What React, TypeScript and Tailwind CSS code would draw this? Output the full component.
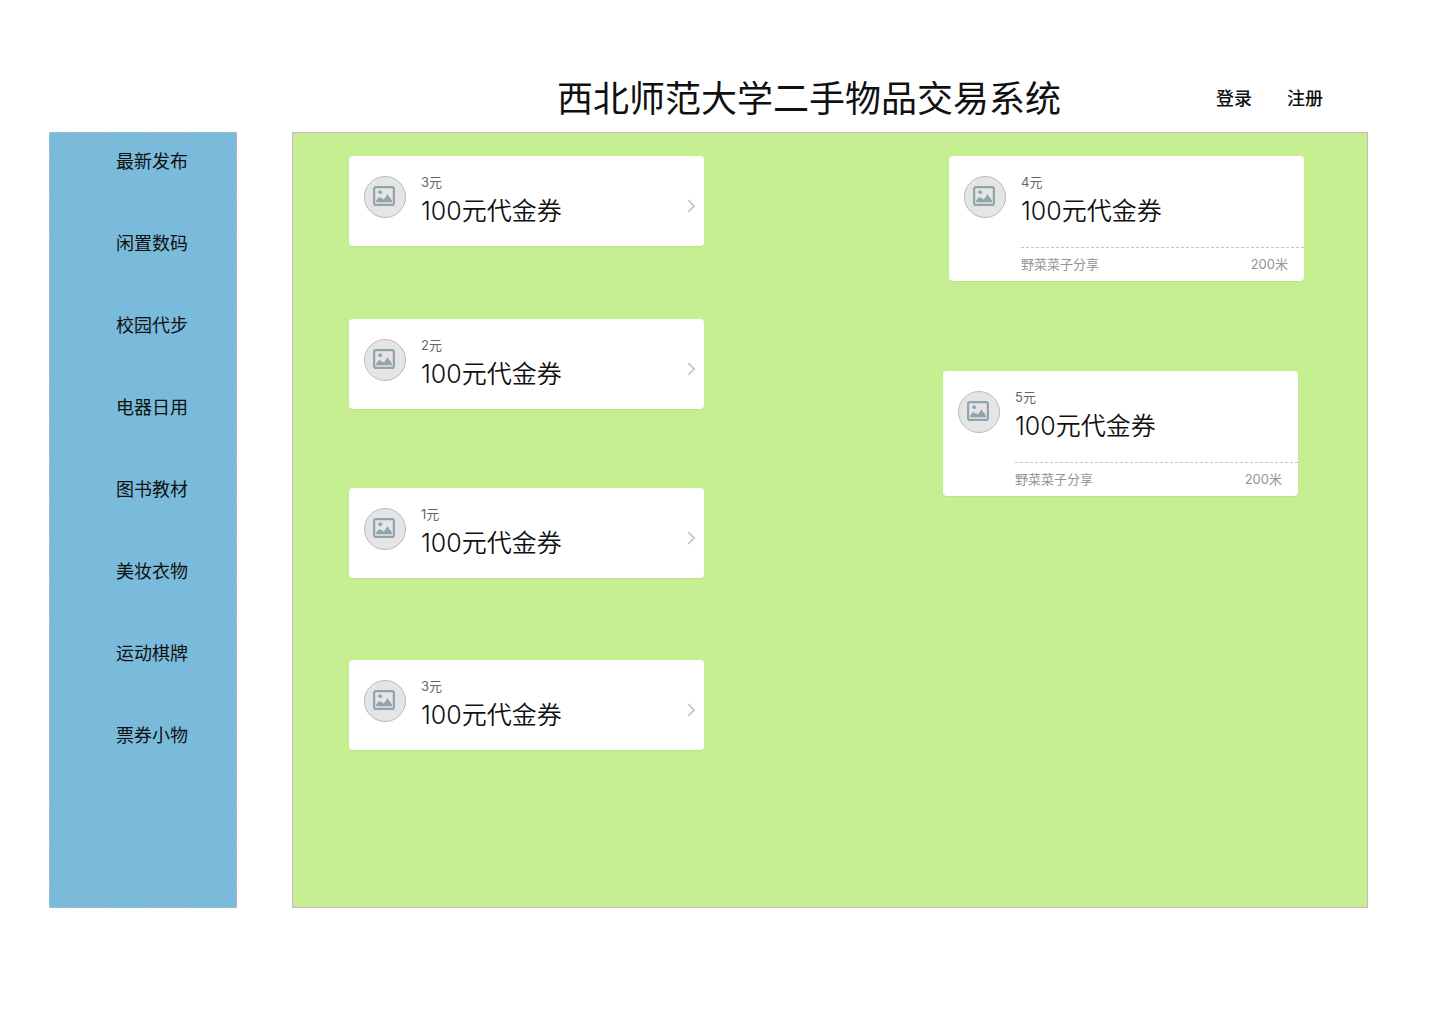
import React from 'react';

const categories = ['最新发布', '闲置数码', '校园代步', '电器日用', '图书教材', '美妆衣物', '运动棋牌', '票券小物'];

type Voucher = {
  price: string;
  spacing: string;
};

const simpleVouchers: Voucher[] = [
  { price: '3元', spacing: 'mt-0' },
  { price: '2元', spacing: 'mt-[73px]' },
  { price: '1元', spacing: 'mt-[79px]' },
  { price: '3元', spacing: 'mt-[82px]' },
];

const sharedVouchers: Voucher[] = [
  { price: '4元', spacing: 'mt-0' },
  { price: '5元', spacing: 'mt-[90px] mr-1.5' },
];

function Thumbnail() {
  return (
    <span className="mt-5 ml-[15px] flex size-[42px] shrink-0 items-center justify-center rounded-full border border-[#bbbbbb] bg-[#e5e5e5] pr-0.5 pb-0.5">
      <svg width="22" height="20" viewBox="0 0 22 20" fill="none" aria-hidden="true">
        <rect x="1.1" y="1.1" width="19.8" height="17.8" rx="2" stroke="#90a4ae" strokeWidth="2.2" />
        <circle cx="7.2" cy="6.2" r="1.9" fill="#90a4ae" />
        <path d="M3.2 16.3v-1.8L6.4 10.8l1.9 1.6.9-.3 1.6 1.6L14.7 8l1.4 3.2 1 .2 1.9 3.5v1.4z" fill="#90a4ae" />
      </svg>
    </span>
  );
}

function VoucherText({ price }: { price: string }) {
  return (
    <>
      <p className="mt-4 text-[13px] leading-5 text-[#666666]">{price}</p>
      <h2 className="text-[25px] leading-[38px] font-[350] text-[#101010]">100元代金券</h2>
    </>
  );
}

function SimpleCard({ price, spacing }: Voucher) {
  return (
    <a href="#voucher" className={`flex h-[90px] w-[355px] rounded bg-white shadow-[0_1px_2px_rgba(0,0,0,0.06)] ${spacing}`}>
      <Thumbnail />
      <div className="ml-[15px] flex-1">
        <VoucherText price={price} />
      </div>
      <svg className="mt-[43px] mr-2 shrink-0" width="9" height="14" viewBox="0 0 9 14" fill="none" aria-hidden="true">
        <path d="M1.3 1.2 7.2 7l-5.9 5.8" stroke="#c7c7cc" strokeWidth="1.8" />
      </svg>
    </a>
  );
}

function SharedCard({ price, spacing }: Voucher) {
  return (
    <article className={`flex h-[125px] w-[355px] rounded bg-white shadow-[0_1px_2px_rgba(0,0,0,0.06)] ${spacing}`}>
      <Thumbnail />
      <div className="ml-[15px] flex flex-1 flex-col">
        <VoucherText price={price} />
        <div className="mt-auto flex h-[34px] items-center justify-between border-t border-dashed border-[#c4c4c4] pr-4 text-[13px] text-[#949494]">
          <span>野菜菜子分享</span>
          <span>200米</span>
        </div>
      </div>
    </article>
  );
}

export default function App() {
  return (
    <div className="min-h-screen bg-white pt-[66px] pr-[72px] pb-[116px] pl-[49px] font-['Inter','Noto_Sans_CJK_SC',sans-serif] text-[#101010]">
      <header className="flex h-[66px] items-center pr-[45px]">
        <div className="flex flex-1 justify-end pr-[155px]">
          <h1 className="text-4xl whitespace-nowrap">西北师范大学二手物品交易系统</h1>
        </div>
        <nav className="flex gap-[35px] text-lg font-medium">
          <a href="#login">登录</a>
          <a href="#register">注册</a>
        </nav>
      </header>
      <div className="flex gap-[55px]">
        <aside className="w-[188px] shrink-0 border border-dashed border-[#bbbbbb] bg-[#7abbdb] pt-[15px]">
          <ul className="flex flex-col gap-[54px] pl-[66px]">
            {categories.map((name) => (
              <li key={name} className="text-lg leading-7">
                <a href="#category">{name}</a>
              </li>
            ))}
          </ul>
        </aside>
        <main className="flex min-h-[776px] flex-1 items-start justify-between border border-[#bbbbbb] bg-[#c6ef91] pt-[23px] pr-[63px] pb-[23px] pl-14">
          <section className="flex flex-col">
            {simpleVouchers.map((v, i) => (
              <SimpleCard key={i} {...v} />
            ))}
          </section>
          <section className="flex flex-col items-end">
            {sharedVouchers.map((v, i) => (
              <SharedCard key={i} {...v} />
            ))}
          </section>
        </main>
      </div>
    </div>
  );
}
